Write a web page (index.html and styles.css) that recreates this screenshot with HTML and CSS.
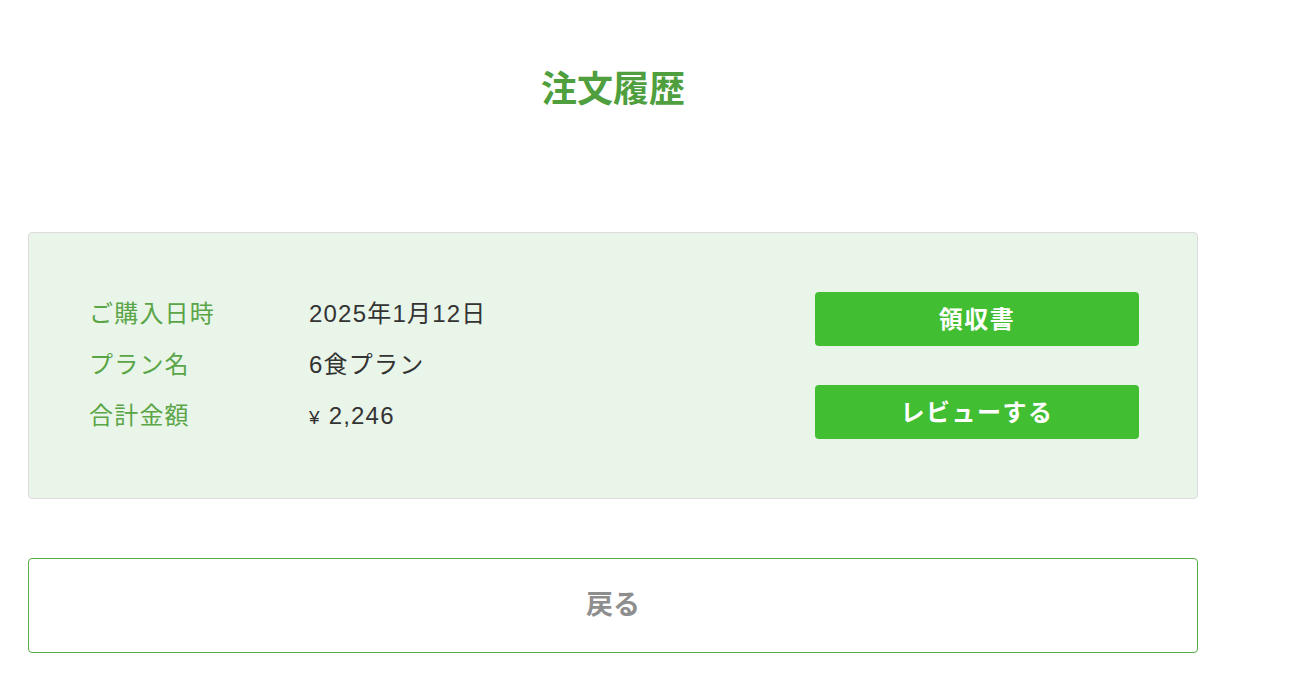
FILE: index.html
```html
<!DOCTYPE html>
<html lang="ja">
<head>
    <meta charset="UTF-8">
    <meta name="viewport" content="width=device-width, initial-scale=1.0">
    <title>注文履歴</title>
    <link rel="stylesheet" href="styles.css">
</head>
<body>
    <div class="page">
        <h1 class="page-title">注文履歴</h1>

        <div class="order-card">
            <dl class="order-info">
                <dt>ご購入日時</dt>
                <dd>2025年1月12日</dd>
                <dt>プラン名</dt>
                <dd>6食プラン</dd>
                <dt>合計金額</dt>
                <dd><span class="yen">¥</span> 2,246</dd>
            </dl>

            <div class="order-actions">
                <button class="btn-green">領収書</button>
                <button class="btn-green">レビューする</button>
            </div>
        </div>

        <button class="btn-back">戻る</button>
    </div>
</body>
</html>
```

FILE: styles.css
```css
*{
    box-sizing: border-box;
}
body{
    margin: 0;
    font-family: "Liberation Sans", "Noto Sans CJK JP", sans-serif;
    color: #333;
    background: #fff;
}
.page{
    width: 1226px;
    padding: 68px 28px 40px;
}
.page-title{
    margin: 0 0 120px;
    text-align: center;
    font-size: 36px;
    line-height: 44px;
    font-weight: bold;
    color: #4f9f3e;
}
.order-card{
    display: flex;
    justify-content: space-between;
    align-items: center;
    padding: 55px 58px 55px 60px;
    background-color: #eaf5ea;
    border: 1px solid #dcdcdc;
    border-radius: 4px;
}
.order-info{
    display: grid;
    grid-template-columns: 220px auto;
    margin: 0;
    font-size: 24px;
    line-height: 51px;
    letter-spacing: 1.2px;
}
.order-info dt{
    color: #5aa547;
}
.order-info dd{
    margin: 0;
    color: #333;
}
.yen{
    font-size: 19px;
}
.order-actions{
    display: flex;
    flex-direction: column;
    gap: 39px;
}
.btn-green{
    width: 324px;
    height: 54px;
    padding: 0 0 3px;
    border: none;
    border-radius: 4px;
    background-color: #42be32;
    color: #fff;
    font-family: inherit;
    font-size: 24px;
    font-weight: bold;
    letter-spacing: 1.5px;
    cursor: pointer;
}
.btn-back{
    display: block;
    width: 100%;
    height: 95px;
    padding: 0 0 6px;
    margin-top: 59px;
    background: #fff;
    border: 1px solid #5aad45;
    border-radius: 4px;
    color: #8e8e8e;
    font-family: inherit;
    font-size: 27px;
    font-weight: bold;
    cursor: pointer;
}
```
